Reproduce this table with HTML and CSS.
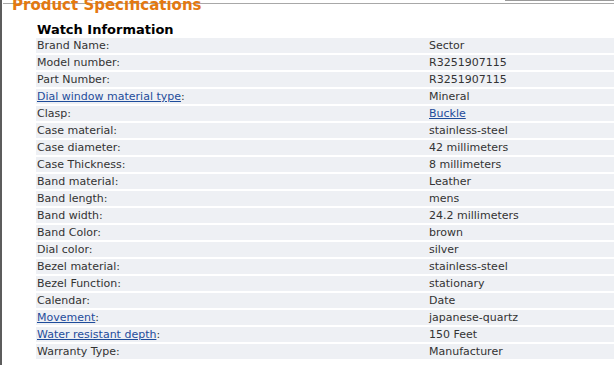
FILE: index.html
```html
<!DOCTYPE html>
<html>
<head>
<meta charset="utf-8">
<link rel="stylesheet" href="styles.css">
</head>
<body>
<div class="page">
  <div class="frame-top"><span class="frame-tab"></span></div>
  <h2 class="title">Product Specifications</h2>
  <div class="section">
    <h3 class="section-title">Watch Information</h3>
    <table class="specs">
      <tr><td class="label">Brand Name:</td><td class="value">Sector</td></tr>
      <tr><td class="label">Model number:</td><td class="value">R3251907115</td></tr>
      <tr><td class="label">Part Number:</td><td class="value">R3251907115</td></tr>
      <tr><td class="label"><a href="#">Dial window material type</a>:</td><td class="value">Mineral</td></tr>
      <tr><td class="label">Clasp:</td><td class="value"><a href="#">Buckle</a></td></tr>
      <tr><td class="label">Case material:</td><td class="value">stainless-steel</td></tr>
      <tr><td class="label">Case diameter:</td><td class="value">42 millimeters</td></tr>
      <tr><td class="label">Case Thickness:</td><td class="value">8 millimeters</td></tr>
      <tr><td class="label">Band material:</td><td class="value">Leather</td></tr>
      <tr><td class="label">Band length:</td><td class="value">mens</td></tr>
      <tr><td class="label">Band width:</td><td class="value">24.2 millimeters</td></tr>
      <tr><td class="label">Band Color:</td><td class="value">brown</td></tr>
      <tr><td class="label">Dial color:</td><td class="value">silver</td></tr>
      <tr><td class="label">Bezel material:</td><td class="value">stainless-steel</td></tr>
      <tr><td class="label">Bezel Function:</td><td class="value">stationary</td></tr>
      <tr><td class="label">Calendar:</td><td class="value">Date</td></tr>
      <tr><td class="label"><a href="#">Movement</a>:</td><td class="value">japanese-quartz</td></tr>
      <tr><td class="label"><a href="#">Water resistant depth</a>:</td><td class="value">150 Feet</td></tr>
      <tr><td class="label">Warranty Type:</td><td class="value">Manufacturer</td></tr>
    </table>
  </div>
</div>
</body>
</html>
```
FILE: styles.css
```css
html, body {
  margin: 0;
  padding: 0;
  background: #fff;
  overflow: hidden;
}
body {
  font-family: "DejaVu Sans", Verdana, sans-serif;
  color: #333;
}
.page {
  border-left: 2px solid #5c5c5c;
  min-height: 365px;
  box-sizing: border-box;
}
.frame-top {
  height: 3px;
  margin-left: 1px;
  border-bottom: 1px solid #a8a8a8;
  display: flex;
  justify-content: flex-end;
}
.frame-tab {
  width: 109px;
  height: 1px;
  background: #9a9a9a;
}
.title {
  margin: -8px 0 0 10px;
  font-size: 15px;
  line-height: 18px;
  font-weight: bold;
  color: #e47911;
}
.section {
  padding-left: 34px;
}
.section-title {
  margin: 9px 0 0 1px;
  font-size: 13px;
  line-height: 13px;
  font-weight: bold;
  color: #000;
}
.specs {
  width: 100%;
  border-collapse: separate;
  border-spacing: 0 2px;
  font-size: 11px;
  color: #333;
}
.specs td {
  background: #eef0f4;
  height: 15px;
  padding: 0 0 0 1px;
  line-height: 15px;
  white-space: nowrap;
}
.specs .label {
  width: 391px;
}
.specs a {
  color: #1e4c9b;
  text-decoration: underline;
}
```
